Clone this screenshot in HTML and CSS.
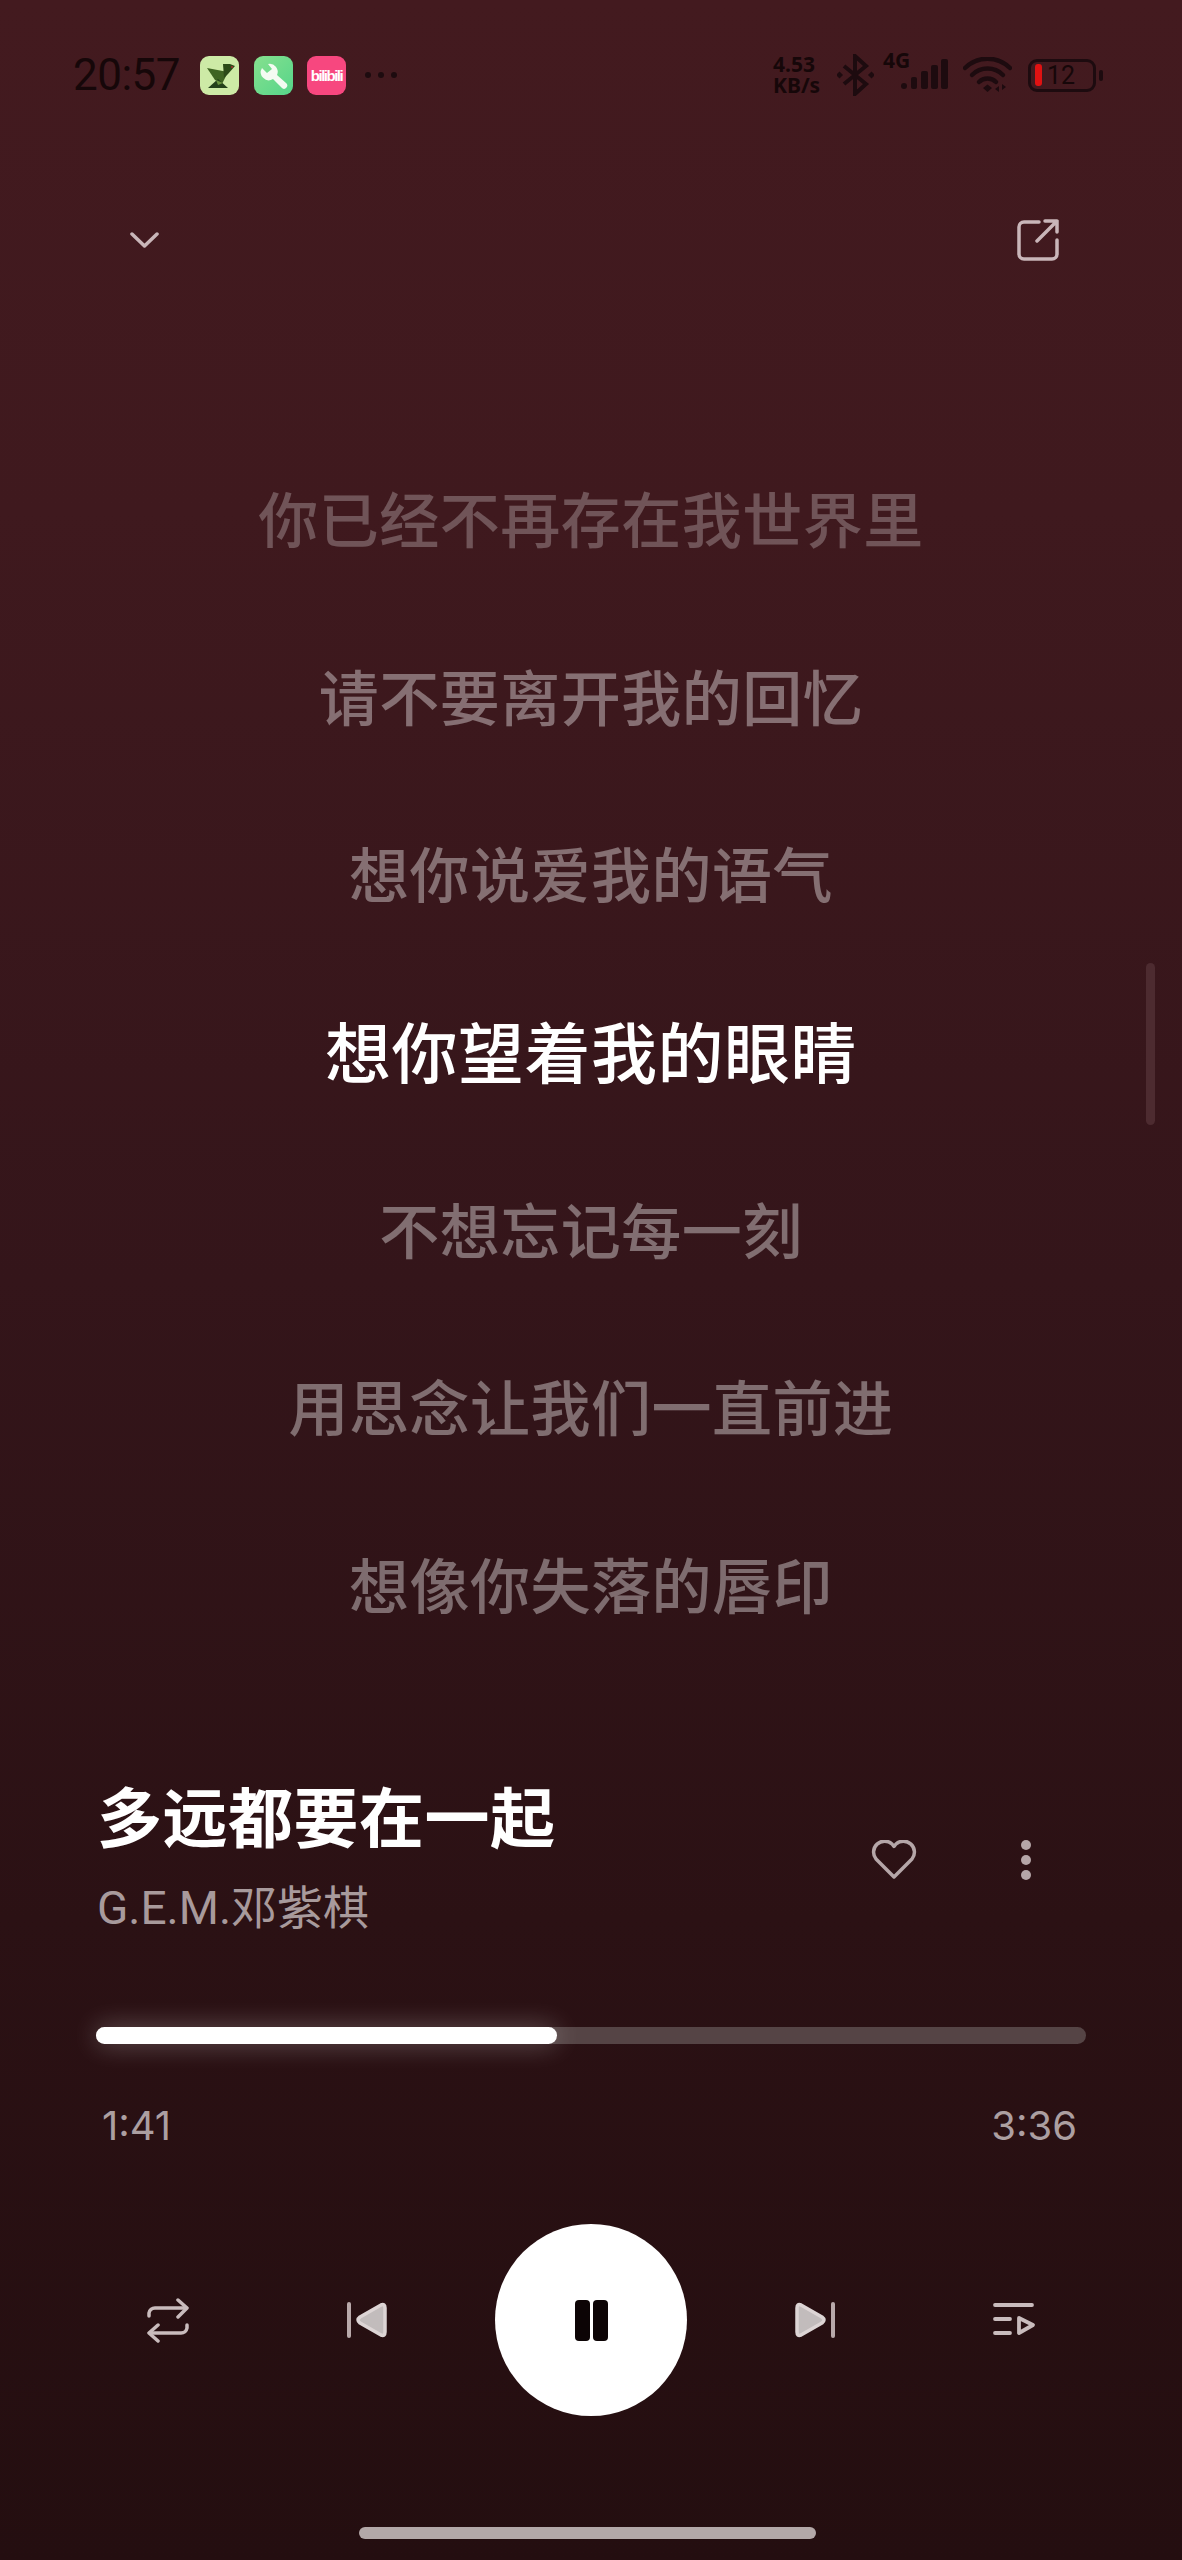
FILE: index.html
```html
<!DOCTYPE html>
<html lang="zh-CN">
<head>
    <meta charset="UTF-8">
    <meta name="viewport" content="width=device-width, initial-scale=1.0">
    <title>多远都要在一起</title>
    <link rel="stylesheet" href="styles.css">
</head>
<body>
    <div class="page">
        <div class="status-bar">
            <span class="clock">20:57</span>
            <div class="app-icon app-bird">
                <svg width="39" height="39" viewBox="0 0 39 39">
                    <polygon points="7,12 28,16 22,28 15,24" fill="#3f6422"/>
                    <polygon points="23,8 30,8 35,10 28,18 24,22" fill="#2c4a18"/>
                    <polygon points="8,32 18,23 28,32" fill="#24401a"/>
                    <polygon points="16,24 23,27 18,29" fill="#6b9440"/>
                    <circle cx="32" cy="11" r="1" fill="#a33"/>
                </svg>
            </div>
            <div class="app-icon app-tool">
                <svg width="39" height="39" viewBox="0 0 39 39">
                    <path d="M8 12 L13 17 L18 13 L14 8 A8 8 0 0 1 23 19 L32 27 A3 3 0 0 1 28 32 L19 23 A8 8 0 0 1 8 12Z" fill="#f4fbf2"/>
                </svg>
            </div>
            <div class="app-icon app-bili"><span>bilibili</span></div>
            <div class="more-dots"><i></i><i></i><i></i></div>

            <div class="status-right">
                <div class="net-speed">
                    <div>4.53</div>
                    <div>KB/s</div>
                </div>
                <svg class="ic-bt" width="37" height="42" viewBox="0 0 37 42">
                    <path d="M7 12 L29 30 L18 40 L18 2 L29 12 L7 30" fill="none" stroke="#1d0b0f" stroke-width="4"/>
                    <rect x="0" y="18.500" width="5" height="5" transform="rotate(45 2.500 21)" fill="#1d0b0f"/>
                    <rect x="32" y="18.500" width="5" height="5" transform="rotate(45 34.500 21)" fill="#1d0b0f"/>
                </svg>
                <div class="cell">
                    <span class="cell-type">4G</span>
                    <svg class="ic-signal" width="47" height="30" viewBox="0 0 47 30">
                        <rect x="0" y="24" width="6" height="6" rx="3" fill="#1d0b0f"/>
                        <rect x="10" y="18" width="6" height="12" rx="2" fill="#1d0b0f"/>
                        <rect x="20" y="12" width="7" height="18" rx="2" fill="#1d0b0f"/>
                        <rect x="30" y="6" width="7" height="24" rx="2" fill="#1d0b0f"/>
                        <rect x="40" y="0" width="7" height="30" rx="2" fill="#1d0b0f"/>
                    </svg>
                </div>
                <svg class="ic-wifi" width="49" height="36" viewBox="0 0 49 36">
                    <g fill="none" stroke="#1d0b0f" stroke-width="4.500" stroke-linecap="round">
                        <path d="M2 11 A32 32 0 0 1 47 11"/>
                        <path d="M9 18 A22 22 0 0 1 40 18"/>
                        <path d="M16 25 A12 12 0 0 1 33 25"/>
                    </g>
                    <path d="M20 31 L24.500 27.500 L29 31 L24.500 35Z" fill="#1d0b0f"/>
                    <path d="M36 29 v6 l-4 -3Z M39 27 v6 l4 -3Z" fill="#1d0b0f"/>
                </svg>
                <div class="battery">
                    <div class="battery-body"><i class="battery-fill"></i><span>12</span></div>
                    <i class="battery-nub"></i>
                </div>
            </div>
        </div>

        <div class="nav">
            <svg width="29" height="16" viewBox="0 0 29 16">
                <path d="M2 2 L14.500 14 L27 2" fill="none" stroke="#c9b6b9" stroke-width="3.500" stroke-linecap="round" stroke-linejoin="round"/>
            </svg>
            <svg width="42" height="42" viewBox="0 0 42 42">
                <path d="M22 3 H7 A5 5 0 0 0 2 8 V35 A5 5 0 0 0 7 40 H35 A5 5 0 0 0 40 35 V21" fill="none" stroke="#c9b6b9" stroke-width="3.500" stroke-linecap="round"/>
                <path d="M20 22 L40 2 M28 2 H40 V13" fill="none" stroke="#c9b6b9" stroke-width="3.500" stroke-linecap="round" stroke-linejoin="round"/>
            </svg>
        </div>

        <div class="lyrics">
            <div class="line far">你已经不再存在我世界里</div>
            <div class="line">请不要离开我的回忆</div>
            <div class="line">想你说爱我的语气</div>
            <div class="line current">想你望着我的眼睛</div>
            <div class="line">不想忘记每一刻</div>
            <div class="line">用思念让我们一直前进</div>
            <div class="line">想像你失落的唇印</div>
        </div>
        <div class="scroll-thumb"></div>

        <div class="song">
            <div class="song-text">
                <div class="song-title">多远都要在一起</div>
                <div class="song-artist">G.E.M.邓紫棋</div>
            </div>
            <div class="song-actions">
                <svg width="46" height="40" viewBox="0 0 46 40">
                    <path d="M23 37 L5 19 A11 11 0 0 1 21 4 L23 6.500 L25 4 A11 11 0 0 1 41 19 Z" fill="none" stroke="#b5a6a8" stroke-width="3.500" stroke-linejoin="round"/>
                </svg>
                <div class="menu-dots"><i></i><i></i><i></i></div>
            </div>
        </div>

        <div class="progress">
            <div class="progress-fill"></div>
        </div>
        <div class="times">
            <span>1:41</span>
            <span>3:36</span>
        </div>

        <div class="controls">
            <svg class="ctl-repeat" width="42" height="45" viewBox="0 0 42 45">
                <g fill="none" stroke="#c9bcbd" stroke-width="3.500" stroke-linecap="round" stroke-linejoin="round">
                    <path d="M2 18 V15 A6 6 0 0 1 8 10 H39"/>
                    <path d="M31 2 L40 10 L31 19"/>
                    <path d="M40 27 V30 A6 6 0 0 1 34 35 H3"/>
                    <path d="M11 27 L2 35 L11 43"/>
                </g>
            </svg>
            <svg class="ctl-prev" width="41" height="36" viewBox="0 0 41 36">
                <rect x="0" y="0" width="4" height="36" rx="2" fill="#b8a9aa"/>
                <path d="M34 3 Q38 1.500 38 6 V30 Q38 34.500 34 33 L13 21 Q9 18 13 15 Z" fill="#c2bcbc" stroke="#ddd5d5" stroke-width="3.500" stroke-linejoin="round"/>
            </svg>
            <div class="play-btn">
                <i></i><i></i>
            </div>
            <svg class="ctl-next" width="41" height="36" viewBox="0 0 41 36">
                <path d="M7 3 Q3 1.500 3 6 V30 Q3 34.500 7 33 L28 21 Q32 18 28 15 Z" fill="#c2bcbc" stroke="#ddd5d5" stroke-width="3.500" stroke-linejoin="round"/>
                <rect x="37" y="0" width="4" height="36" rx="2" fill="#b8a9aa"/>
            </svg>
            <svg class="ctl-queue" width="43" height="34" viewBox="0 0 43 34">
                <g fill="none" stroke="#c9bcbd" stroke-width="3.800" stroke-linecap="round" stroke-linejoin="round">
                    <path d="M2 2 H39"/>
                    <path d="M2 16 H17"/>
                    <path d="M2 30 H17"/>
                    <path d="M26 15 L40 22 L26 30 Z"/>
                </g>
            </svg>
        </div>

        <div class="home-bar"></div>
    </div>
</body>
</html>
```

FILE: styles.css
```css
* { box-sizing: border-box; }
html, body { margin: 0; padding: 0; }
body { font-family: Roboto, "Noto Sans CJK SC", sans-serif; background: #240e10; }

.page {
    position: relative;
    width: 1182px;
    height: 2560px;
    overflow: hidden;
    background: linear-gradient(180deg, #431a1f 0%, #3f191e 20%, #34151a 50%, #2b1114 75%, #240e10 100%);
}

/* status bar */
.status-bar { display: flex; align-items: center; height: 150px; padding-left: 73px; color: #160709; }
.clock { width: 106px; font-size: 44px; line-height: 44px; letter-spacing: -0.5px; white-space: nowrap; }
.app-icon { width: 39px; height: 39px; border-radius: 9px; overflow: hidden; flex: none; }
.app-bird { margin-left: 21px; background: #cdeaa6; }
.app-tool { margin-left: 15px; background: linear-gradient(135deg, #86e08e, #56d58a); }
.app-bili { margin-left: 14px; background: #f7477f; display: flex; align-items: center; justify-content: center; }
.app-bili span { color: #fff; font: bold 15px/39px "Liberation Sans", sans-serif; letter-spacing: -1.5px; }
.more-dots { display: flex; gap: 7px; margin-left: 19px; }
.more-dots i { width: 6px; height: 6px; border-radius: 50%; background: #1d0b0f; }

.status-right { display: flex; align-items: center; margin-left: 376px; }
.net-speed { width: 52px; font: bold 21px/21px "Noto Sans", sans-serif; white-space: nowrap; }
.ic-bt { margin-left: 12px; display: block; }
.cell { position: relative; width: 47px; height: 36px; margin-left: 27px; }
.cell-type { position: absolute; left: -18px; top: -8px; font: bold 21px/22px "Noto Sans", sans-serif; }
.ic-signal { display: block; margin-top: 2px; }
.ic-wifi { display: block; margin-left: 15px; }
.battery { display: flex; align-items: center; margin-left: 16px; }
.battery-body { display: flex; align-items: center; width: 68px; height: 33px; padding-left: 4px; border: 3px solid #1d0b0f; border-radius: 9px; }
.battery-fill { width: 7px; height: 22px; border-radius: 3px; background: #e01212; }
.battery-body span { margin-left: 5px; font-size: 25px; line-height: 27px; }
.battery-nub { width: 4px; height: 11px; margin-left: 3px; border-radius: 2px; background: #1d0b0f; }

/* top nav */
.nav { display: flex; align-items: center; justify-content: space-between; height: 180px; padding: 0 123px 0 130px; }
.nav svg { display: block; }

/* lyrics */
.lyrics { padding-top: 98px; font-family: "Noto Sans CJK SC", sans-serif; }
.line { height: 177.700px; line-height: 177.700px; text-align: center; font-size: 60px; font-weight: 500; letter-spacing: 0.5px; color: rgba(255, 255, 255, 0.38); white-space: nowrap; }
.line.far { color: rgba(255, 255, 255, 0.26); }
.line.current { color: #fff; font-size: 66px; letter-spacing: 0.5px; }
.scroll-thumb { position: absolute; left: 1146px; top: 963px; width: 9px; height: 162px; border-radius: 5px; background: #4d2b30; }

/* song info */
.song { display: flex; justify-content: space-between; margin-top: 102px; padding: 0 151px 0 97px; font-family: "Noto Sans CJK SC", sans-serif; }
.song-title { font-size: 65px; line-height: 80px; font-weight: 700; color: #fff; letter-spacing: 0.5px; white-space: nowrap; }
.song-artist { margin-top: 24px; font-family: Roboto, "Noto Sans CJK SC", sans-serif; font-size: 46px; line-height: 60px; color: #a89a9c; white-space: nowrap; }
.song-actions { display: flex; align-items: center; gap: 104px; height: 40px; margin-top: 66px; }
.menu-dots { display: flex; flex-direction: column; gap: 5px; }
.menu-dots i { width: 10px; height: 10px; border-radius: 50%; background: #b5a6a8; }

/* progress */
.progress { height: 17px; margin: 89px 96px 0; border-radius: 9px; background: #554445; }
.progress-fill { width: 461px; height: 17px; border-radius: 9px; background: #fff; box-shadow: 0 0 26px rgba(255, 255, 255, 0.3); }
.times { display: flex; justify-content: space-between; margin-top: 57px; padding: 0 105px 0 102px; font-family: Inter, sans-serif; font-size: 40px; line-height: 50px; color: #ac9fa1; }

/* controls */
.controls { display: flex; align-items: center; height: 193px; margin-top: 73px; padding-left: 147px; }
.controls svg { display: block; flex: none; }
.ctl-prev { margin-left: 158px; }
.play-btn { display: flex; align-items: center; justify-content: center; gap: 3px; width: 192px; height: 192px; margin-left: 107px; border-radius: 50%; background: #fff; flex: none; }
.play-btn i { width: 15px; height: 41px; border-radius: 4px; background: #0c0405; }
.ctl-next { margin-left: 107px; }
.ctl-queue { margin-left: 158px; }

.home-bar { width: 457px; height: 12px; margin: 110px 0 0 359px; border-radius: 6px; background: #b3a8a8; }
```
